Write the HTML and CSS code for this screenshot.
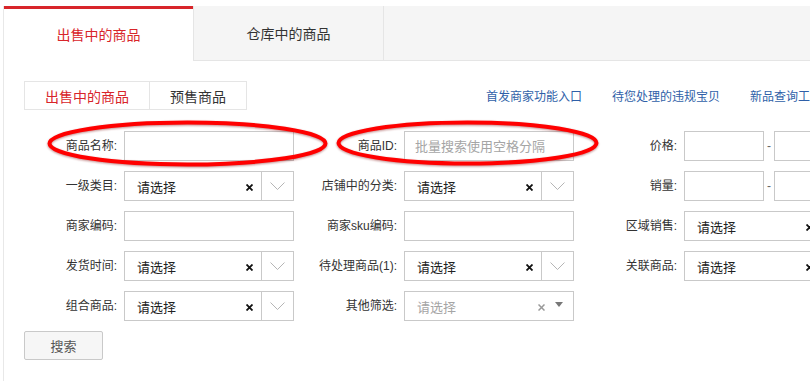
FILE: index.html
```html
<!DOCTYPE html>
<html lang="zh-CN">
<head>
    <meta charset="UTF-8">
    <title>出售中的商品</title>
    <link rel="stylesheet" href="styles.css">
</head>
<body>
    <div class="page">
        <div class="tabs">
            <div class="tab active">出售中的商品</div>
            <div class="tab">仓库中的商品</div>
        </div>

        <div class="content">
            <div class="toolbar">
                <div class="subtabs">
                    <div class="subtab active">出售中的商品</div>
                    <div class="subtab">预售商品</div>
                </div>
                <div class="links">
                    <a href="#">首发商家功能入口</a>
                    <a href="#">待您处理的违规宝贝</a>
                    <a href="#">新品查询工具</a>
                </div>
            </div>

            <form class="filters">
                <!-- row 1 -->
                <div class="field">
                    <label>商品名称:</label>
                    <input type="text" class="input">
                </div>
                <div class="field">
                    <label>商品ID:</label>
                    <input type="text" class="input" placeholder="批量搜索使用空格分隔">
                </div>
                <div class="field">
                    <label>价格:</label>
                    <input type="text" class="input small">
                    <span class="dash">-</span>
                    <input type="text" class="input small">
                </div>

                <!-- row 2 -->
                <div class="field">
                    <label>一级类目:</label>
                    <div class="select">
                        <span class="value">请选择</span>
                        <span class="clear"><svg width="7" height="7" viewBox="0 0 7 7"><path d="M0.5 0.5L6.5 6.5M6.5 0.5L0.5 6.5"/></svg></span>
                        <span class="arrow"><svg width="15" height="8" viewBox="0 0 15 8"><path d="M0.5 0.5L7.5 7.5L14.5 0.5"/></svg></span>
                    </div>
                </div>
                <div class="field">
                    <label>店铺中的分类:</label>
                    <div class="select">
                        <span class="value">请选择</span>
                        <span class="clear"><svg width="7" height="7" viewBox="0 0 7 7"><path d="M0.5 0.5L6.5 6.5M6.5 0.5L0.5 6.5"/></svg></span>
                        <span class="arrow"><svg width="15" height="8" viewBox="0 0 15 8"><path d="M0.5 0.5L7.5 7.5L14.5 0.5"/></svg></span>
                    </div>
                </div>
                <div class="field">
                    <label>销量:</label>
                    <input type="text" class="input small">
                    <span class="dash">-</span>
                    <input type="text" class="input small">
                </div>

                <!-- row 3 -->
                <div class="field">
                    <label>商家编码:</label>
                    <input type="text" class="input">
                </div>
                <div class="field">
                    <label>商家sku编码:</label>
                    <input type="text" class="input">
                </div>
                <div class="field">
                    <label>区域销售:</label>
                    <div class="select">
                        <span class="value">请选择</span>
                        <span class="clear"><svg width="7" height="7" viewBox="0 0 7 7"><path d="M0.5 0.5L6.5 6.5M6.5 0.5L0.5 6.5"/></svg></span>
                        <span class="arrow"><svg width="15" height="8" viewBox="0 0 15 8"><path d="M0.5 0.5L7.5 7.5L14.5 0.5"/></svg></span>
                    </div>
                </div>

                <!-- row 4 -->
                <div class="field">
                    <label>发货时间:</label>
                    <div class="select">
                        <span class="value">请选择</span>
                        <span class="clear"><svg width="7" height="7" viewBox="0 0 7 7"><path d="M0.5 0.5L6.5 6.5M6.5 0.5L0.5 6.5"/></svg></span>
                        <span class="arrow"><svg width="15" height="8" viewBox="0 0 15 8"><path d="M0.5 0.5L7.5 7.5L14.5 0.5"/></svg></span>
                    </div>
                </div>
                <div class="field">
                    <label>待处理商品(1):</label>
                    <div class="select">
                        <span class="value">请选择</span>
                        <span class="clear"><svg width="7" height="7" viewBox="0 0 7 7"><path d="M0.5 0.5L6.5 6.5M6.5 0.5L0.5 6.5"/></svg></span>
                        <span class="arrow"><svg width="15" height="8" viewBox="0 0 15 8"><path d="M0.5 0.5L7.5 7.5L14.5 0.5"/></svg></span>
                    </div>
                </div>
                <div class="field">
                    <label>关联商品:</label>
                    <div class="select">
                        <span class="value">请选择</span>
                        <span class="clear"><svg width="7" height="7" viewBox="0 0 7 7"><path d="M0.5 0.5L6.5 6.5M6.5 0.5L0.5 6.5"/></svg></span>
                        <span class="arrow"><svg width="15" height="8" viewBox="0 0 15 8"><path d="M0.5 0.5L7.5 7.5L14.5 0.5"/></svg></span>
                    </div>
                </div>

                <!-- row 5 -->
                <div class="field">
                    <label>组合商品:</label>
                    <div class="select">
                        <span class="value">请选择</span>
                        <span class="clear"><svg width="7" height="7" viewBox="0 0 7 7"><path d="M0.5 0.5L6.5 6.5M6.5 0.5L0.5 6.5"/></svg></span>
                        <span class="arrow"><svg width="15" height="8" viewBox="0 0 15 8"><path d="M0.5 0.5L7.5 7.5L14.5 0.5"/></svg></span>
                    </div>
                </div>
                <div class="field">
                    <label>其他筛选:</label>
                    <div class="select multi">
                        <span class="value">请选择</span>
                        <span class="clear"><svg width="7" height="7" viewBox="0 0 7 7"><path d="M0.5 0.5L6.5 6.5M6.5 0.5L0.5 6.5"/></svg></span>
                        <span class="caret"></span>
                    </div>
                </div>
            </form>

            <button type="button" class="search-btn">搜索</button>
        </div>
    </div>

    <!-- red hand-drawn marks over the first row -->
    <svg class="marks" width="810" height="381" viewBox="0 0 810 381">
        <ellipse cx="187.5" cy="143.5" rx="138" ry="21"/>
        <ellipse cx="467.5" cy="143" rx="129" ry="20.5"/>
    </svg>
</body>
</html>
```

FILE: styles.css
```css
html, body {
    margin: 0;
    height: 100%;
    overflow: hidden;
}
body {
    position: relative;
    padding-top: 6px;
    box-sizing: border-box;
    font-family: "Liberation Sans", "Noto Sans CJK SC", sans-serif;
    font-size: 12px;
    color: #333;
    background: #fff;
}
.page {
    margin-left: 3px;
    border-left: 1px solid #e8e8e8;
    width: 960px;
    height: 100%;
}

/* top tabs */
.tabs {
    display: flex;
    height: 54px;
    background: #f5f5f5;
    border-bottom: 1px solid #e5e5e5;
}
.tab {
    width: 189px;
    height: 54px;
    display: flex;
    align-items: center;
    justify-content: center;
    font-size: 14px;
    color: #333;
    box-sizing: border-box;
}
.tab + .tab {
    width: 191px;
    border-left: 1px solid #e5e5e5;
    border-right: 1px solid #e5e5e5;
}
.tab.active {
    height: 55px;
    background: #fff;
    color: #d8252a;
    border-top: 3px solid #d8252a;
    padding-bottom: 2px;
}

.content {
    padding: 20px 0 0 20px;
}

/* sub tabs + links */
.toolbar {
    display: flex;
    align-items: center;
}
.subtabs {
    display: flex;
    border: 1px solid #e5e5e5;
    height: 29px;
    box-sizing: border-box;
}
.subtab {
    display: flex;
    align-items: center;
    justify-content: center;
    width: 124px;
    font-size: 14px;
    color: #333;
}
.subtab + .subtab {
    width: 96px;
    border-left: 1px solid #e5e5e5;
}
.subtab.active {
    color: #d8252a;
}
.links {
    display: flex;
    gap: 30px;
    margin-left: 239px;
    white-space: nowrap;
}
.links a {
    color: #2f5fa8;
    text-decoration: none;
    font-size: 12px;
}

/* filter grid */
.filters {
    display: grid;
    grid-template-columns: repeat(3, 280px);
    row-gap: 10px;
    margin: 21px 0 0;
}
.field {
    display: flex;
    align-items: center;
    height: 30px;
}
.field label {
    width: 93px;
    margin: 0 7px 3px 0;
    text-align: right;
    white-space: nowrap;
    color: #333;
}
.input {
    width: 170px;
    height: 30px;
    box-sizing: border-box;
    border: 1px solid #c9c9c9;
    border-radius: 0;
    padding: 0 10px;
    font-family: inherit;
    font-size: 13px;
    outline: none;
}
.input::placeholder {
    color: #a5a5a5;
}
.input.small {
    width: 80px;
}
.dash {
    width: 10px;
    text-align: center;
    color: #666;
}

.select {
    width: 170px;
    height: 30px;
    box-sizing: border-box;
    border: 1px solid #c9c9c9;
    display: flex;
    align-items: center;
    flex-shrink: 0;
}
.select .value {
    flex: 1;
    padding-left: 12px;
    font-size: 13px;
    color: #222;
}
.select .clear {
    display: flex;
    margin: 2px 8px 0 0;
}
.select .clear path {
    stroke: #111;
    stroke-width: 1.8;
    fill: none;
}
.select .arrow {
    width: 31px;
    height: 100%;
    border-left: 1px solid #c9c9c9;
    display: flex;
    align-items: center;
    justify-content: center;
}
.select .arrow path {
    stroke: #b5b5b5;
    stroke-width: 1;
    fill: none;
}
.select.multi .value {
    color: #a5a5a5;
}
.select.multi .clear {
    margin-right: 10px;
}
.select.multi .clear path {
    stroke: #999;
    stroke-width: 1.5;
}
.caret {
    width: 0;
    height: 0;
    border-left: 4px solid transparent;
    border-right: 4px solid transparent;
    border-top: 5px solid #777;
    margin: 0 10px 3px 0;
}

.search-btn {
    display: block;
    margin-top: 10px;
    width: 79px;
    height: 29px;
    background: #f6f6f6;
    border: 1px solid #c9c9c9;
    border-radius: 2px;
    font-family: inherit;
    font-size: 13px;
    color: #555;
    cursor: pointer;
}

.marks {
    position: absolute;
    top: 0;
    left: 0;
    pointer-events: none;
}
.marks ellipse {
    fill: none;
    stroke: #f00;
    stroke-width: 4;
    filter: drop-shadow(0 1px 1px rgba(120, 0, 0, 0.45));
}
```
